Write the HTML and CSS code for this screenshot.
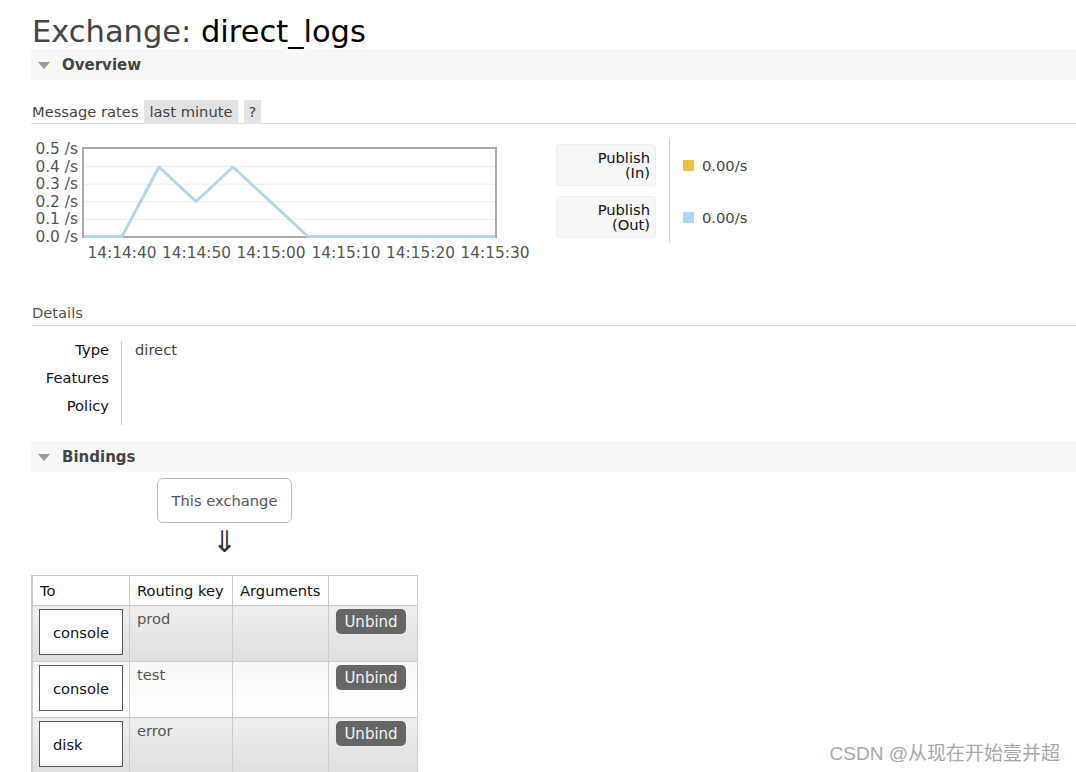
FILE: index.html
```html
<!DOCTYPE html>
<html>
<head>
<meta charset="utf-8">
<link rel="stylesheet" href="styles.css">
</head>
<body>
<div class="page">
  <h1><span class="h-dim">Exchange:</span> direct_logs</h1>
  <div class="section-bar"><span class="tri"></span>Overview</div>

  <div class="rates-head">
    <span class="rh-label">Message rates</span>
    <span class="pill">last minute</span>
    <span class="pill q">?</span>
  </div>

  <div class="rates">
    <svg class="chart" width="505" height="124" viewBox="0 0 505 124">
      <g class="grid">
        <line x1="52" y1="27.6" x2="465" y2="27.6"/>
        <line x1="52" y1="45.2" x2="465" y2="45.2"/>
        <line x1="52" y1="62.8" x2="465" y2="62.8"/>
        <line x1="52" y1="80.4" x2="465" y2="80.4"/>
      </g>
      <rect class="frame" x="52" y="9" width="413" height="89"/>
      <polyline class="series" points="53,97.5 91,97.5 128,28 165,62.5 202,28 277,97.5 464,97.5"/>
      <g class="ylab">
        <text x="47" y="15">0.5 /s</text>
        <text x="47" y="32.6">0.4 /s</text>
        <text x="47" y="50.2">0.3 /s</text>
        <text x="47" y="67.8">0.2 /s</text>
        <text x="47" y="85.4">0.1 /s</text>
        <text x="47" y="103">0.0 /s</text>
      </g>
      <g class="xlab">
        <text x="91" y="119">14:14:40</text>
        <text x="165.5" y="119">14:14:50</text>
        <text x="240" y="119">14:15:00</text>
        <text x="315" y="119">14:15:10</text>
        <text x="389.5" y="119">14:15:20</text>
        <text x="464" y="119">14:15:30</text>
      </g>
    </svg>

    <div class="legend">
      <div class="legend-labels">
        <div class="legend-box">Publish<br>(In)</div>
        <div class="legend-box">Publish<br>(Out)</div>
      </div>
      <div class="legend-values">
        <div class="lv"><span class="swatch yellow"></span>0.00/s</div>
        <div class="lv"><span class="swatch blue"></span>0.00/s</div>
      </div>
    </div>
  </div>

  <div class="sub-head">Details</div>
  <div class="details">
    <div class="dk">
      <div class="drow">Type</div>
      <div class="drow">Features</div>
      <div class="drow">Policy</div>
    </div>
    <div class="dv">
      <div class="drow">direct</div>
    </div>
  </div>

  <div class="section-bar bindings"><span class="tri"></span>Bindings</div>

  <div class="this-exchange">This exchange</div>
  <div class="arrow">⇓</div>

  <table class="bindings-table">
    <thead>
      <tr>
        <th class="c-to">To</th>
        <th class="c-key">Routing key</th>
        <th class="c-args">Arguments</th>
        <th class="c-act"></th>
      </tr>
    </thead>
    <tbody>
      <tr class="alt1">
        <td><span class="dest">console</span></td>
        <td class="key">prod</td>
        <td></td>
        <td><span class="btn">Unbind</span></td>
      </tr>
      <tr class="alt0">
        <td><span class="dest">console</span></td>
        <td class="key">test</td>
        <td></td>
        <td><span class="btn">Unbind</span></td>
      </tr>
      <tr class="alt1">
        <td><span class="dest">disk</span></td>
        <td class="key">error</td>
        <td></td>
        <td><span class="btn">Unbind</span></td>
      </tr>
    </tbody>
  </table>
</div>
<div class="watermark">CSDN @从现在开始壹并超</div>
</body>
</html>
```

FILE: styles.css
```css
html, body {
  margin: 0;
  padding: 0;
  background: #fff;
}
body {
  font-family: "DejaVu Sans", Verdana, sans-serif;
  font-size: 14.7px;
  color: #444;
  position: relative;
  min-height: 772px;
}
.page {
  padding-left: 31px;
}
h1 {
  margin: 0;
  padding-top: 14px;
  font-size: 30.5px;
  line-height: 35px;
  font-weight: normal;
  color: #000;
  padding-left: 1px;
}
.h-dim {
  color: #444;
}
.section-bar {
  height: 31px;
  background: #f7f7f7;
  display: flex;
  align-items: center;
  font-weight: bold;
  font-size: 15px;
  color: #444;
}
.tri {
  width: 0;
  height: 0;
  border-left: 6.5px solid transparent;
  border-right: 6.5px solid transparent;
  border-top: 7px solid #999;
  margin-left: 7px;
  margin-right: 12px;
  margin-top: 1px;
}
.rates-head {
  margin-top: 20px;
  height: 23px;
  display: flex;
  align-items: stretch;
  border-bottom: 1px solid #ddd;
}
.rh-label {
  display: flex;
  align-items: center;
  padding-left: 1px;
  margin-right: 5px;
  color: #444;
}
.pill {
  display: flex;
  align-items: center;
  background: #e2e2e2;
  padding: 0 5px 0 6px;
  margin-right: 6px;
  color: #444;
}
.pill.q {
  padding: 0 5px;
}
.rates {
  margin-top: 15px;
  display: flex;
  align-items: flex-start;
}
.chart {
  display: block;
  flex: none;
}
.chart .grid line {
  stroke: #ececec;
  stroke-width: 1;
}
.chart .frame {
  fill: none;
  stroke: #aaa;
  stroke-width: 2;
}
.chart .series {
  fill: none;
  stroke: #b3d6ea;
  stroke-width: 3;
  stroke-linejoin: round;
}
.chart text {
  font-family: "DejaVu Sans", Verdana, sans-serif;
  font-size: 15.4px;
  fill: #555;
}
.chart .ylab text {
  text-anchor: end;
}
.chart .xlab text {
  text-anchor: middle;
}
.legend {
  display: flex;
  margin-left: 20px;
}
.legend-labels {
  display: flex;
  flex-direction: column;
  gap: 10px;
  padding: 5px 0 5px;
  width: 100px;
}
.legend-box {
  box-sizing: border-box;
  height: 42px;
  background: #f7f7f7;
  border: 1px solid #eee;
  border-radius: 3px;
  text-align: right;
  padding: 5px 5px 0 0;
  line-height: 15px;
  color: #111;
}
.legend-values {
  margin-left: 13px;
  border-left: 1px solid #ccc;
  padding: 5px 0 5px 13px;
  display: flex;
  flex-direction: column;
  gap: 10px;
}
.lv {
  height: 42px;
  display: flex;
  align-items: center;
  color: #444;
}
.swatch {
  width: 11px;
  height: 11px;
  margin-right: 8px;
}
.swatch.yellow { background: #edc240; }
.swatch.blue { background: #afd8f8; }
.sub-head {
  margin-top: 40px;
  line-height: 20px;
  padding: 0 0 2px 1px;
  border-bottom: 1px solid #ddd;
  color: #555;
}
.details {
  margin-top: 15px;
  display: flex;
}
.dk {
  width: 78px;
  padding-right: 12px;
  border-right: 1px solid #ccc;
  text-align: right;
  color: #111;
}
.dv {
  padding-left: 13px;
  color: #444;
}
.drow {
  line-height: 17px;
  height: 17px;
  padding-bottom: 11px;
}
.section-bar.bindings {
  margin-top: 16px;
}
.this-exchange {
  margin: 6px 0 0 126px;
  box-sizing: border-box;
  width: 135px;
  height: 45px;
  border: 1px solid #bbb;
  border-radius: 6px;
  display: flex;
  align-items: center;
  justify-content: center;
  color: #555;
}
.arrow {
  margin: 4px 0 0 126px;
  width: 135px;
  text-align: center;
  font-family: "DejaVu Sans", sans-serif;
  font-size: 30px;
  line-height: 30px;
  height: 30px;
  color: #333;
}
.bindings-table {
  margin-top: 18px;
  border-collapse: collapse;
  border-left: 2px solid #ccc;
  border-bottom: 2px solid #ccc;
  color: #111;
}
.bindings-table th,
.bindings-table td {
  border: 1px solid #ccc;
  text-align: left;
  vertical-align: top;
  padding: 0;
  font-weight: normal;
}
.bindings-table th {
  height: 29px;
  padding: 0 7px;
  vertical-align: middle;
  background: #fff;
}
.c-to { width: 80px; }
.c-key { width: 88px; }
.c-args { width: 81px; }
.c-act { width: 74px; }
.bindings-table td {
  height: 51px;
  padding: 3px 6px 0 6px;
}
.bindings-table td.key {
  padding: 4px 7px 0 7px;
  line-height: 17px;
  color: #555;
}
tr.alt1 td {
  background: linear-gradient(#efefef, #dedede);
}
tr.alt0 td {
  background: linear-gradient(#f7f7f7, #fff);
}
.dest {
  box-sizing: border-box;
  display: flex;
  align-items: center;
  width: 84px;
  height: 46px;
  border: 1px solid #555;
  background: #fff;
  padding-left: 13px;
  color: #111;
}
.btn {
  display: inline-flex;
  align-items: center;
  justify-content: center;
  width: 70px;
  height: 25px;
  margin-left: 1px;
  background: #666;
  color: #f4f4f4;
  border-radius: 5px;
  font-size: 15px;
}
.watermark {
  position: absolute;
  right: 16px;
  top: 741px;
  font-family: "Liberation Sans", "Noto Sans CJK SC", sans-serif;
  font-size: 19px;
  line-height: 26px;
  color: #a8a8a8;
}
```
